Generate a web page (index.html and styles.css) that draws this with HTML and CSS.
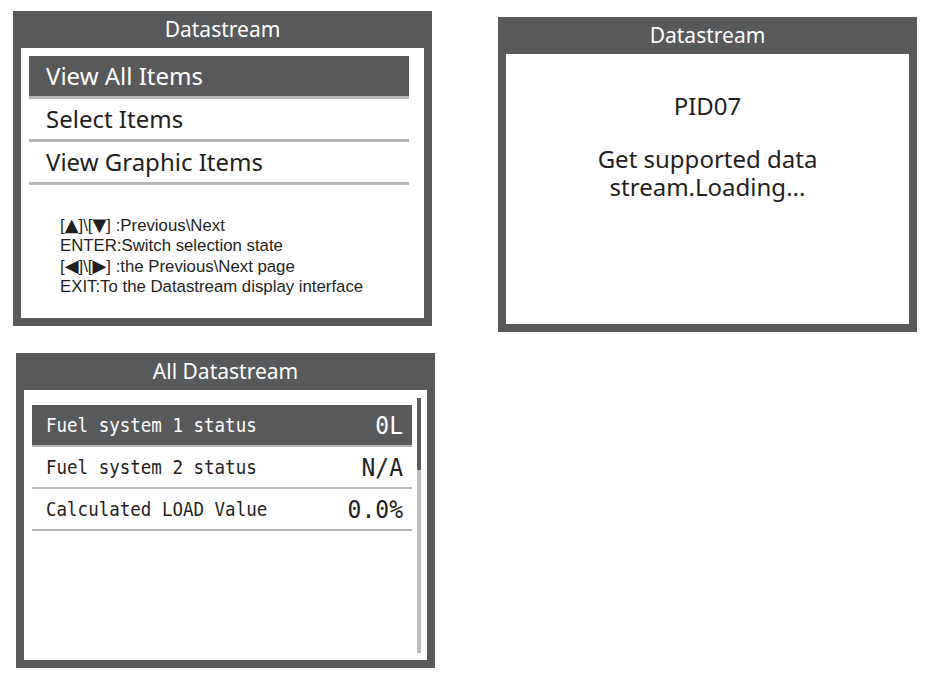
FILE: index.html
```html
<!DOCTYPE html>
<html>
<head>
<meta charset="utf-8">
<title>Datastream screens</title>
<link rel="stylesheet" href="styles.css">
</head>
<body>
<div class="screens">

  <div class="panel panel-menu">
    <div class="panel-title">Datastream</div>
    <div class="panel-body menu-body">
      <div class="menu-item selected">View All Items</div>
      <div class="menu-item">Select Items</div>
      <div class="menu-item">View Graphic Items</div>
      <div class="help">
        <div>[<span class="key">&#9650;</span>]\[<span class="key">&#9660;</span>] :Previous\Next</div>
        <div>ENTER:Switch selection state</div>
        <div>[<span class="key">&#9664;</span>]\[<span class="key">&#9654;</span>] :the Previous\Next page</div>
        <div>EXIT:To the Datastream display interface</div>
      </div>
    </div>
  </div>

  <div class="panel panel-loading">
    <div class="panel-title">Datastream</div>
    <div class="panel-body loading-body">
      <div class="pid">PID07</div>
      <div class="loading-msg">Get supported data</div>
      <div>stream.Loading...</div>
    </div>
  </div>

  <div class="panel panel-data">
    <div class="panel-title">All Datastream</div>
    <div class="panel-body data-body">
      <div class="data-list">
        <div class="data-row selected"><span class="data-name">Fuel system 1 status</span><span class="data-value">0L</span></div>
        <div class="data-row"><span class="data-name">Fuel system 2 status</span><span class="data-value">N/A</span></div>
        <div class="data-row"><span class="data-name">Calculated LOAD Value</span><span class="data-value">0.0%</span></div>
      </div>
      <div class="scrollbar"><div class="scroll-thumb"></div></div>
    </div>
  </div>

</div>
</body>
</html>
```

FILE: styles.css
```css
body
{
  background-color:#FFFFFF;
  margin:0;
  padding:11px 0 0 13px;
  font-family:"Noto Sans", "Open Sans", sans-serif;
  color:#231F20;
}

.screens
{
  display:grid;
  grid-template-columns:419px 419px;
  column-gap:66px;
  row-gap:21px;
  align-items:start;
}

.panel
{
  background-color:#58595B;
  padding:0 8px 8px 8px;
  width:403px;
}

.panel-loading
{
  margin-top:6px;
}

.panel-data
{
  margin-left:3px;
}

.panel-title
{
  height:37px;
  line-height:37px;
  text-align:center;
  color:#FFFFFF;
  font-size:21px;
}

.panel-body
{
  background-color:#FFFFFF;
  height:270px;
  box-sizing:border-box;
}

/* menu screen */

.menu-body
{
  padding:8px 15px 0 8px;
}

.menu-item
{
  height:40px;
  line-height:40px;
  font-size:24px;
  padding-left:17px;
  border-bottom:3px solid #B5B5B5;
}

.menu-item.selected
{
  background-color:#58595B;
  color:#FFFFFF;
}

.help
{
  margin-top:31px;
  padding-left:31px;
  font-family:"Liberation Sans", Arial, sans-serif;
  font-size:16.8px;
  line-height:20.3px;
  color:#231F20;
  white-space:nowrap;
}

.key
{
  font-family:"DejaVu Sans", sans-serif;
  font-size:18px;
  line-height:10px;
}

/* loading screen */

.loading-body
{
  padding-top:38px;
  text-align:center;
  font-size:24px;
  line-height:28px;
}

.loading-msg
{
  margin-top:25px;
}

/* data list screen */

.data-body
{
  display:flex;
  padding:8px 6px 7px 8px;
}

.data-list
{
  width:380px;
  margin-top:7px;
}

.data-row
{
  display:flex;
  justify-content:space-between;
  align-items:center;
  height:40px;
  padding:0 9px 0 14px;
  border-bottom:2px solid #B5B5B5;
  font-family:"DejaVu Sans Mono", monospace;
}

.data-row.selected
{
  background-color:#58595B;
  color:#FFFFFF;
}

.data-name
{
  display:inline-block;
  font-size:17.5px;
  transform:scaleY(1.1);
}

.data-value
{
  display:inline-block;
  font-size:23px;
  transform:scaleY(1.1);
}

.scrollbar
{
  width:4px;
  margin-left:5px;
  background-color:#BDBDBD;
}

.scroll-thumb
{
  height:72px;
  background-color:#58595B;
}
```
